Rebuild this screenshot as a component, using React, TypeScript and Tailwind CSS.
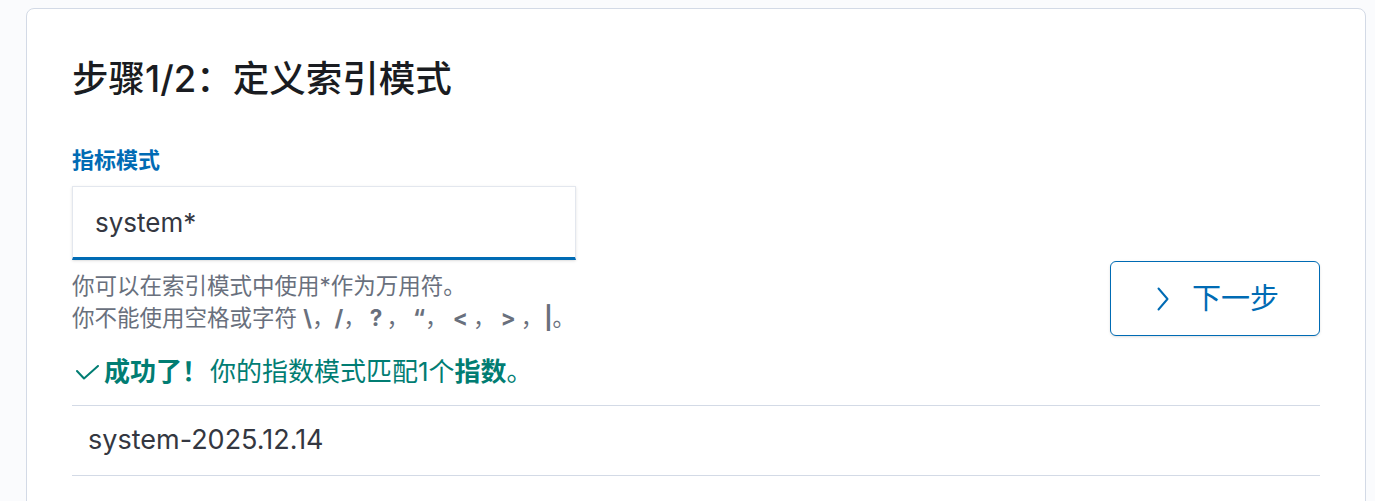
const font = { fontFamily: "Inter, 'Noto Sans CJK SC', sans-serif" }

const Chevron = () => (
  <svg width="12" height="24" viewBox="0 0 12 24" fill="none" stroke="currentColor" strokeWidth="2" strokeLinecap="round" strokeLinejoin="round">
    <polyline points="1.5,1.5 10.5,12 1.5,22.5" />
  </svg>
)

const Check = () => (
  <svg width="23" height="15" viewBox="0 0 23 15" fill="none" stroke="currentColor" strokeWidth="2" strokeLinecap="round" strokeLinejoin="round">
    <polyline points="1,6 8,13.5 22,1" />
  </svg>
)

export default function App() {
  return (
    <div className="min-h-screen bg-[#fafbfd] pt-2 pl-[26px] pr-[9px]" style={font}>
      <div className="min-h-[600px] rounded-lg border border-[#d3dae6] bg-white px-[45px] pt-[48px]">
        <h1 className="text-[36.5px] leading-[45px] font-medium text-[#1a1c21]">
          步骤1/2：定义索引模式
        </h1>

        <div className="mt-[44px] flex items-end justify-between">
          <div className="w-[504px]">
            <label className="block text-[22px] leading-[28px] font-bold text-[#006bb4]">指标模式</label>
            <div className="mt-[12px] flex h-[74px] items-center border border-[#e3e7ee] border-b-[3px] border-b-[#006bb4] bg-white px-[22px] shadow-sm">
              <span className="text-[26px] text-[#343741]">system*</span>
            </div>
            <div className="mt-[10px] whitespace-nowrap text-[22.5px] leading-[32px] text-[#69707d]">
              <p>你可以在索引模式中使用*作为万用符。</p>
              <p>
                你不能使用空格或字符 <b>\</b>，<b>/</b>，<b className="mx-[4px]">?</b>，<b className="ml-[4px]">“</b>，<b className="mx-[5px]">&lt;</b>，<b className="mx-[5px]">&gt;</b>，<b className="ml-[1px]">|</b>。
              </p>
            </div>
          </div>

          <button className="mb-[-2px] flex h-[75px] w-[210px] items-center justify-center gap-[23px] rounded-md border border-[#006bb4] bg-white pl-[6px] text-[#006bb4] shadow-sm">
            <Chevron />
            <span className="text-[29px]">下一步</span>
          </button>
        </div>

        <div className="mt-[22px] flex items-center gap-[5px] pl-[4px] text-[26px] leading-[32px] text-[#017d73]">
          <Check />
          <p>
            <b>成功了！</b><span className="ml-[2px]">你的指数模式匹配1个</span><b>指数</b>。
          </p>
        </div>

        <div className="mt-[17px] border-y border-[#d3dae6]">
          <div className="flex h-[69px] items-center px-4 text-[27px] text-[#343741]">system-2025.12.14</div>
        </div>
      </div>
    </div>
  )
}
